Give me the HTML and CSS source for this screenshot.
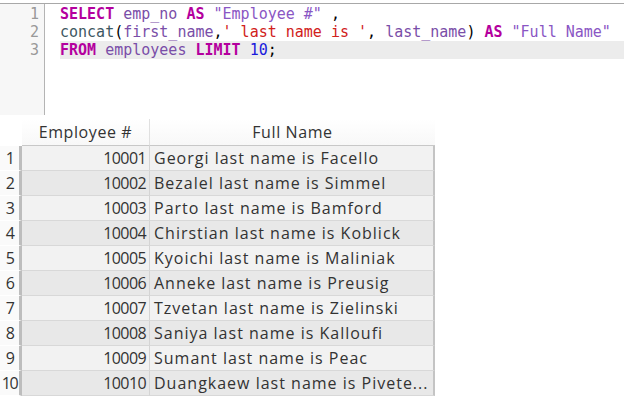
FILE: index.html
```html
<!DOCTYPE html>
<html>
<head>
<meta charset="utf-8">
<link rel="stylesheet" href="styles.css">
</head>
<body>
<div class="editor">
  <div class="gutter">
    <div class="ln">1</div>
    <div class="ln">2</div>
    <div class="ln">3</div>
  </div>
  <div class="code">
    <div class="line"><span class="kw">SELECT</span> <span class="id">emp_no</span> <span class="kw">AS</span> <span class="dq">"Employee #"</span> ,</div>
    <div class="line"><span class="fn">concat</span>(<span class="id">first_name</span>,<span class="str">' last name is '</span>, <span class="id">last_name</span>) <span class="kw">AS</span> <span class="dq">"Full Name"</span></div>
    <div class="line active"><span class="kw">FROM</span> <span class="id">employees</span> <span class="kw">LIMIT</span> <span class="num">10</span>;</div>
  </div>
</div>
<div class="grid">
  <div class="hcorner"></div>
  <div class="hcell">Employee #</div>
  <div class="hcell last">Full Name</div>

  <div class="rn">1</div><div class="c num-c odd">10001</div><div class="c name-c odd">Georgi last name is Facello</div>
  <div class="rn">2</div><div class="c num-c even">10002</div><div class="c name-c even">Bezalel last name is Simmel</div>
  <div class="rn">3</div><div class="c num-c odd">10003</div><div class="c name-c odd">Parto last name is Bamford</div>
  <div class="rn">4</div><div class="c num-c even">10004</div><div class="c name-c even">Chirstian last name is Koblick</div>
  <div class="rn">5</div><div class="c num-c odd">10005</div><div class="c name-c odd">Kyoichi last name is Maliniak</div>
  <div class="rn">6</div><div class="c num-c even">10006</div><div class="c name-c even">Anneke last name is Preusig</div>
  <div class="rn">7</div><div class="c num-c odd">10007</div><div class="c name-c odd">Tzvetan last name is Zielinski</div>
  <div class="rn">8</div><div class="c num-c even">10008</div><div class="c name-c even">Saniya last name is Kalloufi</div>
  <div class="rn">9</div><div class="c num-c odd">10009</div><div class="c name-c odd">Sumant last name is Peac</div>
  <div class="rn">10</div><div class="c num-c even">10010</div><div class="c name-c even">Duangkaew last name is Pivete...</div>
</div>
</body>
</html>
```

FILE: styles.css
```css
html, body {
  margin: 0;
  padding: 0;
  background: #ffffff;
}
body {
  padding-top: 3px;
  width: 624px;
  height: 397px;
  overflow: hidden;
}
.editor {
  display: flex;
  border-top: 1px solid #a8a8a8;
  height: 111px;
  font-family: "DejaVu Sans Mono", monospace;
  font-size: 15px;
  line-height: 18px;
}
.gutter {
  width: 45px;
  background: #f7f7f7;
  border-right: 1px solid #b4b4b4;
  padding-top: 1px;
  box-sizing: border-box;
}
.ln {
  text-align: right;
  padding-right: 5px;
  color: #999999;
}
.code {
  flex: 1;
  padding-left: 15px;
  padding-top: 1px;
  color: #000;
}
.line {
  white-space: pre;
}
.line.active {
  background: #ececec;
}
.kw { color: #b4009e; font-weight: bold; }
.id { color: #7a4ea8; }
.dq { color: #8a56c4; }
.str { color: #d1211b; }
.fn { color: #3e5862; }
.num { color: #1a1adc; }

.grid {
  margin-top: 4px;
  display: grid;
  grid-template-columns: 22px 128px 285px;
  grid-auto-rows: 25px;
  grid-template-rows: 27px;
  font-family: "Open Sans", sans-serif;
  font-size: 16px;
  letter-spacing: 1px;
  color: #333333;
  width: 435px;
}
.hcorner {
  background: #ffffff;
}
.hcell {
  display: flex;
  align-items: center;
  justify-content: center;
  background: linear-gradient(#ffffff, #f8f8f8);
  border-right: 1px solid #e0e0e0;
  border-bottom: 1px solid #c8c8c8;
  letter-spacing: 0.6px;
}
.hcell.last {
  border-right: none;
}
.rn {
  display: flex;
  align-items: center;
  justify-content: center;
  background: #fafafa;
  border-right: 3px solid #bdbdbd;
  border-bottom: 1px solid #ffffff;
  letter-spacing: -1.5px;
  font-size: 16px;
  overflow: hidden;
}
.c {
  display: flex;
  align-items: center;
  border-bottom: 1px solid #d8d8d8;
  white-space: nowrap;
  overflow: hidden;
}
.num-c {
  justify-content: flex-end;
  padding-right: 3px;
  border-right: 1px solid #d4d4d4;
  letter-spacing: -0.6px;
}
.name-c {
  padding-left: 4px;
  border-right: 2px solid #c4c4c4;
}
.odd { background: #f2f2f2; }
.even { background: #e8e8e8; }
```
